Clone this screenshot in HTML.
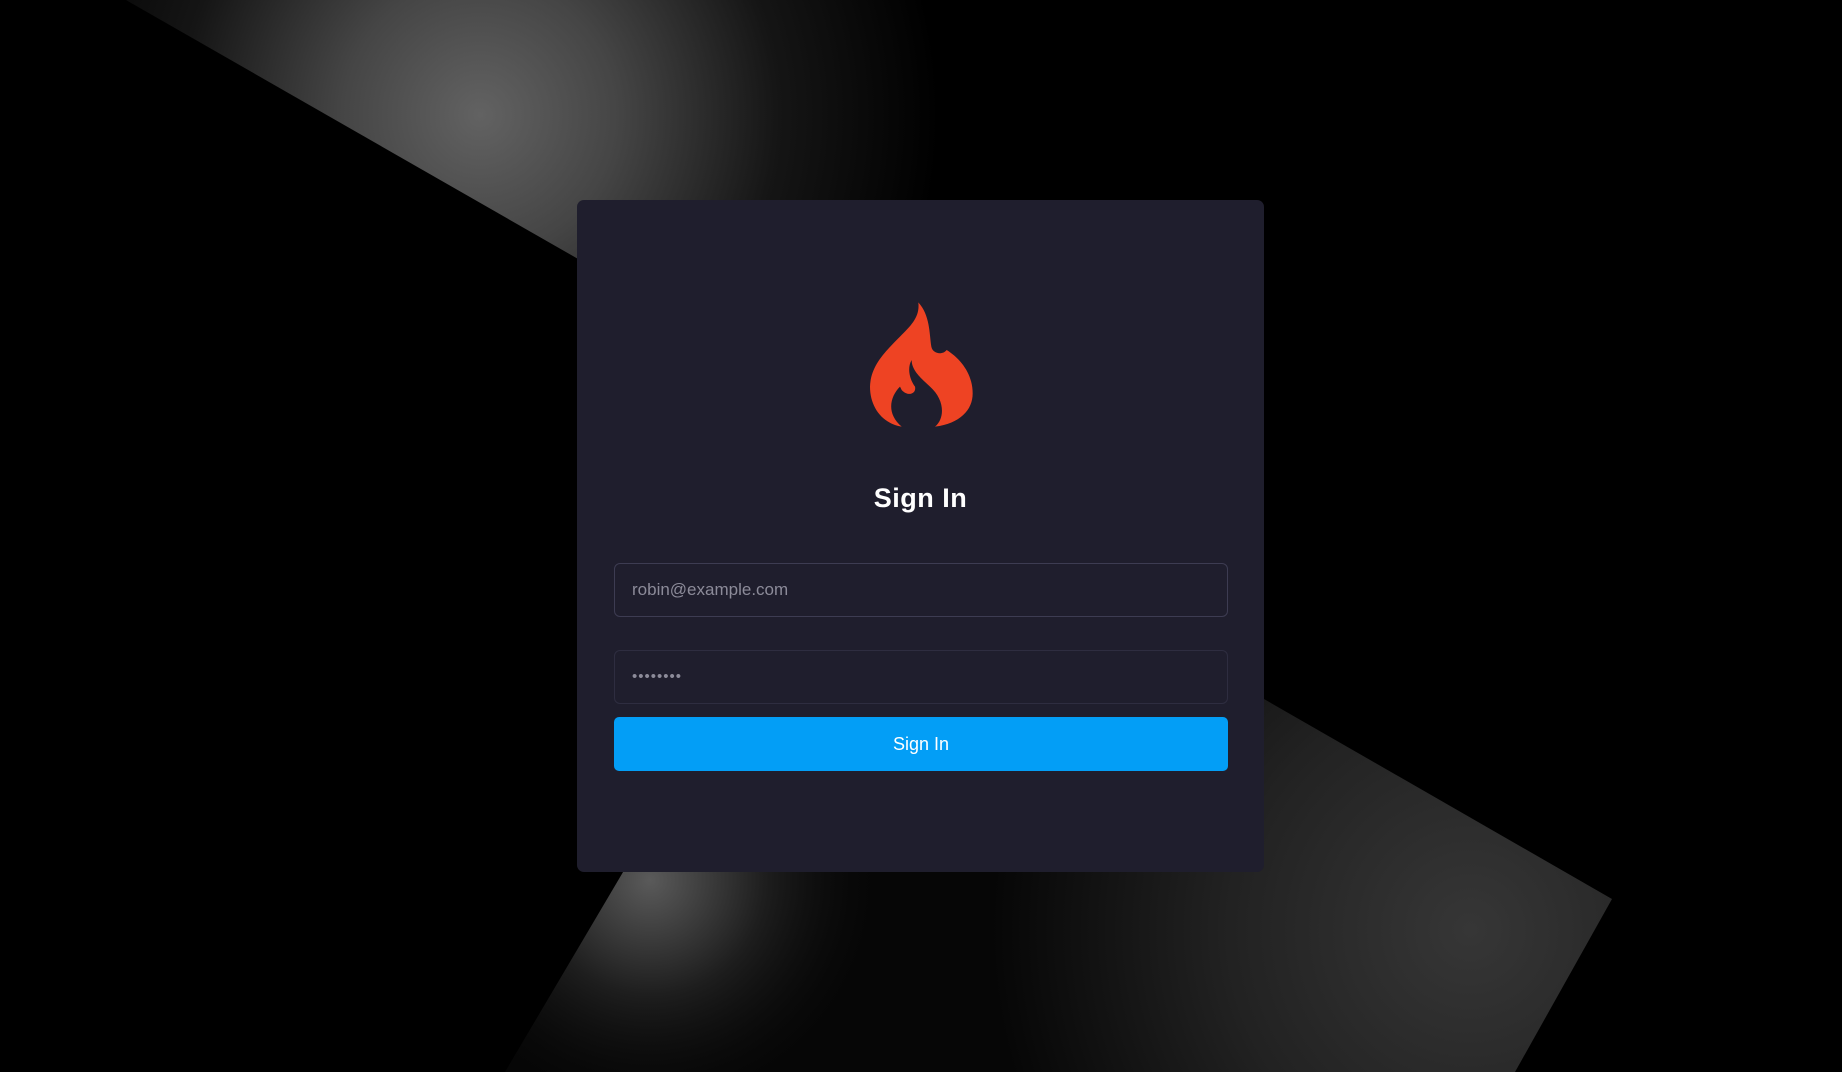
<!DOCTYPE html>
<html><head><meta charset="utf-8"><style>
html,body{margin:0;padding:0;width:1842px;height:1072px;overflow:hidden;background:#000;font-family:"Liberation Sans",sans-serif}
svg.bg{position:absolute;left:0;top:0}
.card{position:absolute;left:577px;top:200px;width:687px;height:672px;background:#1f1e2d;border-radius:7px}
.logo{position:absolute;left:292px;top:102px}
h1{position:absolute;left:0;width:100%;margin:0;text-align:center;color:#fff;font-size:27px;font-weight:bold;top:283px;letter-spacing:0.5px}
.inp{position:absolute;left:37px;width:614px;height:54px;border:1px solid #3d3c52;border-radius:6px;background:#1f1e2d;color:#8c8b99;font-size:17px;line-height:52px;padding-left:17px;box-sizing:border-box}
.btn{position:absolute;left:37px;top:517px;width:614px;height:54px;background:#039ef6;border-radius:5px;color:#fff;font-size:18px;line-height:54px;text-align:center}
</style></head><body>
<svg class="bg" width="1842" height="1072" viewBox="0 0 1842 1072">
<defs>
<radialGradient id="ga" gradientUnits="userSpaceOnUse" cx="480" cy="115" r="460">
<stop offset="0" stop-color="#626262"/><stop offset="0.3" stop-color="#454545"/><stop offset="0.65" stop-color="#151515"/><stop offset="1" stop-color="#000"/></radialGradient>
<radialGradient id="gb" gradientUnits="userSpaceOnUse" cx="650" cy="880" r="230">
<stop offset="0" stop-color="#5a5a5a"/><stop offset="0.5" stop-color="#1e1e1e"/><stop offset="1" stop-color="#0a0a0a" stop-opacity="0"/></radialGradient>
<radialGradient id="gc" gradientUnits="userSpaceOnUse" cx="1470" cy="930" r="480">
<stop offset="0" stop-color="#363636"/><stop offset="0.5" stop-color="#222"/><stop offset="1" stop-color="#060606"/></radialGradient>
<filter id="bl"><feGaussianBlur stdDeviation="6"/></filter>
</defs>
<polygon points="126,0 1842,0 1842,983" fill="url(#ga)"/>
<polygon points="701,740 900,400 1264,699 1612,899 1515,1072 505,1072" fill="url(#gc)"/>
<polygon points="701,740 900,400 1264,699 1612,899 1515,1072 505,1072" fill="url(#gb)"/>
</svg>
<div class="card">
<svg class="logo" width="106" height="128" viewBox="57 36 318 384">
<path fill="#ee4323" d="M205 37 C240 75 238 130 244 170 C248 192 278 196 290 180 C330 205 368 250 368 310 C368 360 330 400 255 410 C285 385 285 330 240 290 C210 262 185 240 185 210 C170 235 180 270 195 290 C200 310 175 322 155 300 L150 290 C120 320 108 370 155 410 C95 400 60 350 60 290 C62 230 100 190 150 140 C185 105 210 80 205 37 Z"/>
</svg>
<h1>Sign In</h1>
<div class="inp" style="top:363px">robin@example.com</div>
<div class="inp" style="top:450px;border-color:#2e2d40;letter-spacing:1px;font-size:15px">••••••••</div>
<div class="btn">Sign In</div>
</div>
</body></html>
